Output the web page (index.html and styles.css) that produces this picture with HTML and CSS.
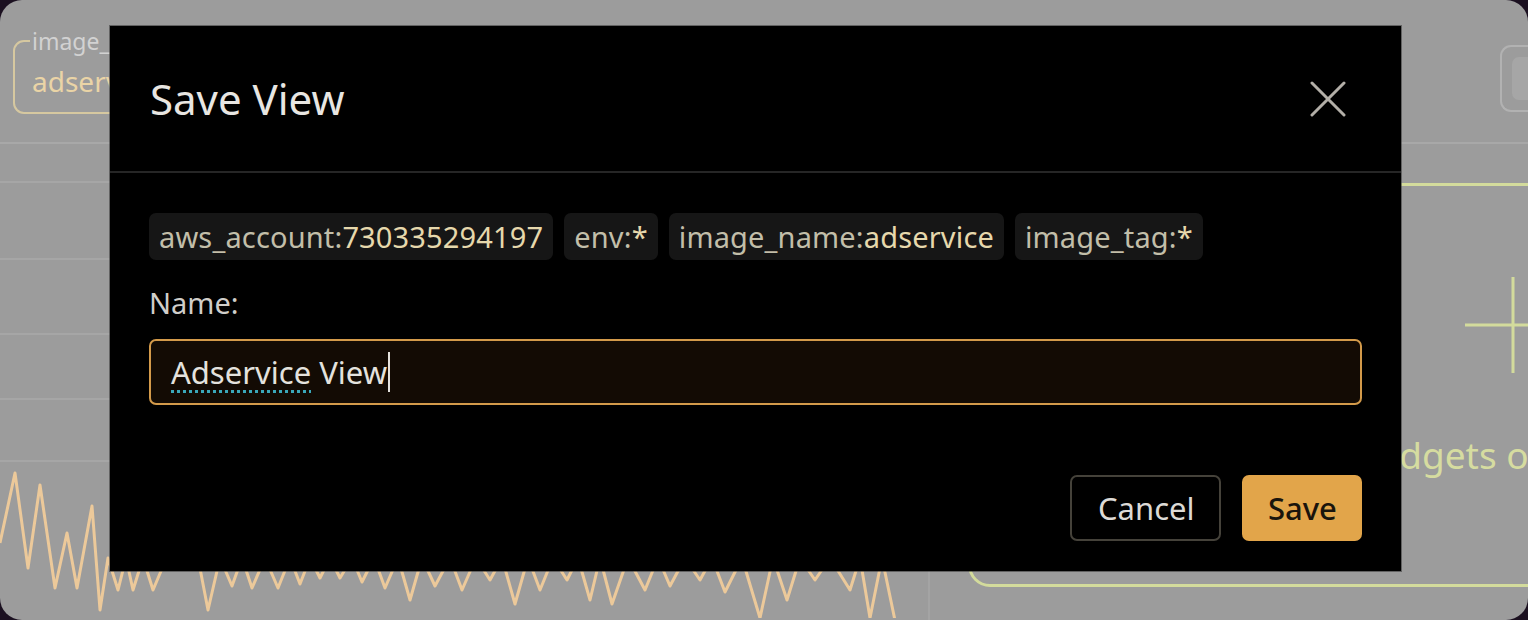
FILE: index.html
```html
<!DOCTYPE html>
<html lang="en">
<head>
<meta charset="utf-8">
<title>Save View</title>
<link rel="stylesheet" href="styles.css">
</head>
<body>
<div class="screen">
  <div class="dash">
    <div class="topbar">
      <fieldset class="filter">
        <legend>image_name</legend>
        <span class="filter-value">adservice</span>
      </fieldset>
      <div class="tr-box"><div class="tr-inner"></div></div>
    </div>
    <div class="main">
      <div class="left-col">
        <div class="grid-row r1"></div>
        <div class="grid-row r2"></div>
        <div class="grid-row r3"></div>
        <div class="grid-row r4"></div>
        <div class="grid-row r5"></div>
        <svg class="chart" width="930" height="160" viewBox="0 460 930 160">
          <polyline fill="none" stroke="#ecc99a" stroke-width="3" stroke-linejoin="round" points="0,545 15,475 28,570 40,487 55,590 67,535 77,590 92,508 100,612 108,560 118,592 126,560 133,592 143,560 153,592 175,540 198,560 208,612 220,560 232,588 242,560 252,590 265,560 278,590 290,560 300,586 310,560 320,580 330,560 340,580 352,560 362,584 374,560 385,590 398,560 410,602 422,560 435,588 450,560 462,592 476,560 490,582 502,560 515,606 528,560 540,592 553,560 567,582 578,560 590,602 600,560 612,606 628,560 645,592 658,560 670,588 685,560 700,582 712,560 725,594 742,560 760,620 773,560 787,602 800,560 815,582 830,560 850,592 860,560 870,620 882,560 897,632"/>
        </svg>
      </div>
      <div class="right-col">
        <div class="add-panel">
          <svg class="plus" width="98" height="98" viewBox="0 0 98 98"><path d="M49 1V97M1 49H97" stroke="#d3db9c" stroke-width="3" fill="none"/></svg>
          <div class="add-text">Add widgets or get started</div>
        </div>
      </div>
    </div>
  </div>

  <div class="modal" role="dialog" aria-labelledby="modal-title">
    <div class="modal-header">
      <h2 id="modal-title" class="modal-title">Save View</h2>
      <button class="close-btn" aria-label="Close">
        <svg width="36" height="36" viewBox="0 0 36 36"><path d="M2 2L34 34M34 2L2 34" stroke="#b3afa8" stroke-width="3" stroke-linecap="round" fill="none"/></svg>
      </button>
    </div>
    <div class="modal-body">
      <div class="chips">
        <span class="chip"><span class="k">aws_account:</span><span class="v">730335294197</span></span>
        <span class="chip"><span class="k">env:</span><span class="v">*</span></span>
        <span class="chip"><span class="k">image_name:</span><span class="v">adservice</span></span>
        <span class="chip"><span class="k">image_tag:</span><span class="v">*</span></span>
      </div>
      <label class="field-label">Name:</label>
      <div class="text-input"><span class="misspelled">Adservice</span>&nbsp;View<span class="caret"></span></div>
    </div>
    <div class="modal-footer">
      <button class="btn btn-cancel">Cancel</button>
      <button class="btn btn-save">Save</button>
    </div>
  </div>
</div>
</body>
</html>
```
FILE: styles.css
```css
* { box-sizing: border-box; }
html, body { margin: 0; padding: 0; background: #1b1020; }
body { width: 1528px; height: 620px; overflow: hidden; font-family: "Noto Sans", "Open Sans", sans-serif; }

.screen {
  position: relative;
  width: 1528px;
  height: 620px;
  border-radius: 22px;
  overflow: hidden;
  background: #9c9c9c;
}

/* faded dashboard behind the dialog */
.dash { display: flex; flex-direction: column; height: 100%; }
.topbar {
  height: 144px;
  border-bottom: 2px solid #a8a8a8;
  display: flex;
  align-items: flex-start;
  padding: 28px 0 0 13px;
}
.filter {
  margin: 0;
  width: 260px;
  height: 86px;
  border: 2px solid #d6c8a0;
  border-radius: 11px;
  padding: 0 0 0 17px;
}
.filter legend {
  font-size: 23px;
  color: #d2d2d2;
  padding: 0 2px;
  margin-left: -2px;
  line-height: 26px;
}
.filter-value {
  display: block;
  font-size: 28px;
  line-height: 36px;
  color: #ead4a6;
  margin-top: 9px;
}
.tr-box {
  margin-left: auto;
  margin-top: 17px;
  width: 28px;
  height: 67px;
  border: 2px solid #b2b2b2;
  border-right: none;
  border-radius: 11px 0 0 11px;
  padding: 10px 0 0 10px;
}
.tr-inner { height: 43px; background: #a6a6a6; border-radius: 7px 0 0 7px; }

.main { flex: 1; display: flex; }
.left-col {
  width: 930px;
  border-right: 2px solid #a4a4a4;
  display: flex;
  flex-direction: column;
}
.grid-row { border-bottom: 2px solid #a6a6a6; }
.r1 { height: 39px; }
.r2 { height: 77px; }
.r3 { height: 75px; }
.r4 { height: 65px; }
.r5 { height: 62px; }
.chart { display: block; margin-top: -4px; }

.right-col { flex: 1; padding: 39px 0 0 38px; }
.add-panel {
  width: 1090px;
  height: 404px;
  border: 3px solid #d3db9c;
  border-radius: 22px;
  display: flex;
  flex-direction: column;
  align-items: center;
  padding-top: 90px;
}
.plus { display: block; }
.add-text {
  margin-top: 60px;
  font-size: 37px;
  line-height: 42px;
  color: #d6dca0;
  white-space: nowrap;
}

/* dialog */
.modal {
  position: absolute;
  left: 110px;
  top: 26px;
  width: 1291px;
  height: 545px;
  background: #000;
  display: flex;
  flex-direction: column;
  box-shadow: 0 0 0 1px rgba(60,60,60,0.6);
}
.modal-header {
  height: 147px;
  border-bottom: 2px solid #262626;
  display: flex;
  align-items: center;
  justify-content: space-between;
  padding: 0 55px 0 40px;
  flex-shrink: 0;
}
.modal-title {
  margin: 0;
  font-size: 42px;
  font-weight: 400;
  color: #e8e6e2;
  line-height: 56px;
}
.close-btn {
  background: none;
  border: none;
  padding: 0;
  width: 36px;
  height: 36px;
  cursor: pointer;
  display: flex;
}
.modal-body { padding: 40px 39px 0; display: flex; flex-direction: column; }
.chips { display: flex; gap: 11px; }
.chip {
  height: 47px;
  line-height: 47px;
  padding: 0 10px;
  background: #161616;
  border-radius: 7px;
  font-size: 29px;
  letter-spacing: 0.15px;
  white-space: nowrap;
}
.chip .k { color: #c2bea9; }
.chip .v { color: #e6d8ac; }
.field-label {
  margin-top: 23px;
  font-size: 29px;
  line-height: 40px;
  color: #d0ceca;
}
.text-input {
  margin-top: 16px;
  height: 66px;
  border: 2px solid #d39a4a;
  border-radius: 7px;
  background: #130b04;
  padding: 0 20px;
  display: flex;
  align-items: center;
  font-size: 31px;
  color: #e4e2de;
  white-space: pre;
}
.misspelled {
  text-decoration: underline dotted #3aa8bb;
  text-decoration-thickness: 3px;
  text-underline-offset: 6px;
}
.caret {
  display: inline-block;
  width: 2px;
  height: 40px;
  background: #e4e2de;
  margin-left: 1px;
}
.modal-footer {
  margin-top: auto;
  display: flex;
  justify-content: flex-end;
  gap: 21px;
  padding: 0 39px 30px;
}
.btn {
  height: 66px;
  border-radius: 7px;
  font-family: "Noto Sans", "Open Sans", sans-serif;
  font-size: 31px;
  padding: 0 26px;
  cursor: pointer;
}
.btn-cancel {
  width: 151px;
  background: #000;
  border: 2px solid #45423a;
  color: #dcdad6;
}
.btn-save {
  width: 120px;
  background: #e2a54a;
  border: none;
  color: #1a140c;
  font-weight: 500;
}
```
